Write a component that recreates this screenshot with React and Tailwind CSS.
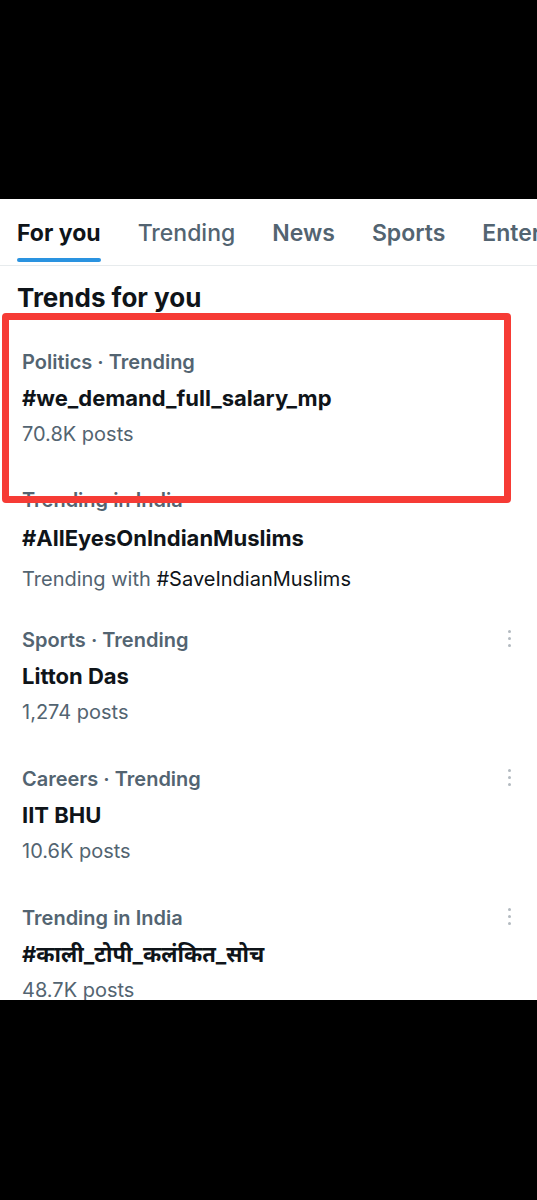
import React from 'react';

const tabs = [
  { label: 'For you', cls: 'font-bold text-[#0f1419]' },
  { label: 'Trending', cls: 'font-medium text-[#536471]' },
  { label: 'News', cls: 'font-semibold text-[#536471]' },
  { label: 'Sports', cls: 'font-semibold text-[#536471]' },
  { label: 'Entertainment', cls: 'font-semibold text-[#536471]' },
];

const trends = [
  { meta: 'Politics · Trending', title: '#we_demand_full_salary_mp', sub: '70.8K posts', menu: false },
  { meta: 'Trending in India', title: '#AllEyesOnIndianMuslims', sub: 'with', menu: false },
  { meta: 'Sports · Trending', title: 'Litton Das', sub: '1,274 posts', menu: true },
  { meta: 'Careers · Trending', title: 'IIT BHU', sub: '10.6K posts', menu: true },
  { meta: 'Trending in India', title: '#काली_टोपी_कलंकित_सोच', sub: '48.7K posts', menu: true },
];

const font = { fontFamily: 'Inter, "Noto Sans", "Noto Sans Devanagari", "Lohit Devanagari", sans-serif' };

// three small grey dots, the row's overflow menu
const Dots = () => (
  <div className="absolute right-[26px] top-[8px] flex flex-col gap-[4px]">
    <span className="w-[3px] h-[3px] rounded-full bg-[#b3bac0]" />
    <span className="w-[3px] h-[3px] rounded-full bg-[#b3bac0]" />
    <span className="w-[3px] h-[3px] rounded-full bg-[#b3bac0]" />
  </div>
);

const TrendRow = ({ trend }) => {
  const withLine = trend.sub === 'with';
  return (
    <div className="relative h-[139px] px-[22px]">
      {trend.menu && <Dots />}
      <div className={`${withLine ? 'h-[34px]' : 'h-[36px]'} flex items-center text-[20px] font-semibold text-[#536471]`}>
        {trend.meta}
      </div>
      <div className={`${withLine ? 'h-[42px]' : 'h-[36px]'} flex items-center text-[22px] font-bold text-[#0f1419]`}>
        {trend.title}
      </div>
      <div className={`${withLine ? 'h-[40px]' : 'h-[36px]'} flex items-center text-[20px] text-[#536471]`}>
        {withLine ? (
          <span>
            Trending with <span className="text-[#0f1419]">#SaveIndianMuslims</span>
          </span>
        ) : (
          trend.sub
        )}
      </div>
    </div>
  );
};

export default function App() {
  return (
    <div className="w-full h-[1200px] bg-black flex flex-col" style={font}>
      <div className="h-[199px] shrink-0" />

      <div className="relative h-[801px] shrink-0 bg-white overflow-hidden">
        {/* Tabs */}
        <div className="flex items-end gap-[37px] pl-[17px] pt-[20px] border-b border-[#e7ebed] whitespace-nowrap overflow-hidden">
          {tabs.map((tab, i) => (
            <div key={tab.label} className="flex flex-col shrink-0">
              <span className={`h-[28px] leading-[28px] text-[23px] ${tab.cls}`}>{tab.label}</span>
              <span className={`mt-[11px] h-[4px] mb-[3px] rounded-full ${i === 0 ? 'bg-[#2a93e0]' : 'bg-transparent'}`} />
            </div>
          ))}
        </div>

        {/* Section heading */}
        <div className="h-[78px] pt-[12px] pl-[17px]">
          <h2 className="leading-[40px] text-[26px] font-bold text-[#0f1419]">Trends for you</h2>
        </div>

        {trends.map((trend, i) => (
          <TrendRow key={i} trend={trend} />
        ))}

        {/* red highlight drawn over the first trend */}
        <div className="absolute left-[2px] top-[114px] w-[509px] h-[190px] border-[7px] border-[#f63b35] rounded-[4px]" />
      </div>
    </div>
  );
}
